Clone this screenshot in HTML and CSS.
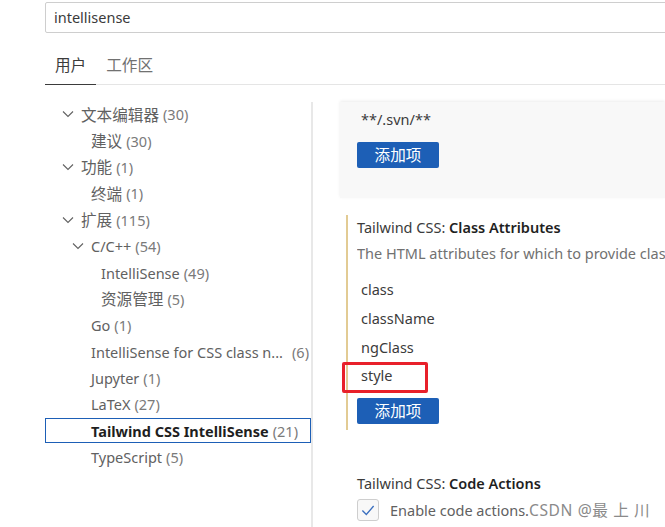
FILE: index.html
```html
<!DOCTYPE html>
<html>
<head>
<meta charset="utf-8">
<link rel="stylesheet" href="styles.css">
</head>
<body>
<div class="page">
  <div class="header">
    <div class="search">intellisense</div>
    <div class="tabs">
      <div class="tab active cjk">用户</div>
      <div class="tab cjk">工作区</div>
    </div>
  </div>
  <div class="main">
    <div class="toc">
      <div class="row l1"><svg class="chev" viewBox="0 0 12 8"><polyline points="1,1.5 6,6.5 11,1.5"/></svg><span class="lbl cjk">文本编辑器</span><span class="cnt">(30)</span></div>
      <div class="row l2"><span class="lbl cjk">建议</span><span class="cnt">(30)</span></div>
      <div class="row l1"><svg class="chev" viewBox="0 0 12 8"><polyline points="1,1.5 6,6.5 11,1.5"/></svg><span class="lbl cjk">功能</span><span class="cnt">(1)</span></div>
      <div class="row l2"><span class="lbl cjk">终端</span><span class="cnt">(1)</span></div>
      <div class="row l1"><svg class="chev" viewBox="0 0 12 8"><polyline points="1,1.5 6,6.5 11,1.5"/></svg><span class="lbl cjk">扩展</span><span class="cnt">(115)</span></div>
      <div class="row l2c"><svg class="chev" viewBox="0 0 12 8"><polyline points="1,1.5 6,6.5 11,1.5"/></svg><span class="lbl">C/C++</span><span class="cnt">(54)</span></div>
      <div class="row l3"><span class="lbl">IntelliSense</span><span class="cnt">(49)</span></div>
      <div class="row l3"><span class="lbl cjk">资源管理</span><span class="cnt">(5)</span></div>
      <div class="row l2"><span class="lbl">Go</span><span class="cnt">(1)</span></div>
      <div class="row l2"><span class="lbl">IntelliSense for CSS class n...</span><span class="cnt gap">(6)</span></div>
      <div class="row l2"><span class="lbl">Jupyter</span><span class="cnt">(1)</span></div>
      <div class="row l2"><span class="lbl">LaTeX</span><span class="cnt">(27)</span></div>
      <div class="row l2 selected"><span class="lbl strong">Tailwind CSS IntelliSense</span><span class="cnt">(21)</span></div>
      <div class="row l2"><span class="lbl">TypeScript</span><span class="cnt">(5)</span></div>
    </div>
    <div class="sep"></div>
    <div class="content">
      <div class="prev">
        <div class="prev-item">**/.svn/**</div>
        <div class="btn cjk">添加项</div>
      </div>
      <div class="setting focused">
        <div class="title"><span class="cat">Tailwind CSS: </span><span class="name">Class Attributes</span></div>
        <div class="desc">The HTML attributes for which to provide class completions, hover previews, linting etc.</div>
        <div class="list">
          <div class="item">class</div>
          <div class="item">className</div>
          <div class="item">ngClass</div>
          <div class="item marked">style<span class="redbox"></span></div>
        </div>
        <div class="btn cjk">添加项</div>
      </div>
      <div class="setting second">
        <div class="title"><span class="cat">Tailwind CSS: </span><span class="name">Code Actions</span></div>
        <div class="check-row">
          <span class="checkbox"><svg viewBox="0 0 16 16"><polyline points="3,8.5 6.5,12 13,4.5"/></svg></span>
          <span class="check-text">Enable code actions.</span><span class="wm">CSDN @最 上 川</span>
        </div>
      </div>
    </div>
  </div>
</div>
</body>
</html>
```

FILE: styles.css
```css
* { box-sizing: border-box; }
html, body { margin: 0; padding: 0; background: #fff; }
body {
  width: 665px;
  height: 527px;
  overflow: hidden;
  font-family: "Noto Sans", "Noto Sans CJK SC", sans-serif;
  font-size: 14.5px;
  color: #616161;
}
.page { width: 665px; height: 527px; overflow: hidden; }
.cjk { font-size: 15.6px; }

.header { padding-top: 2px; padding-left: 45px; }
.search {
  width: 640px;
  height: 31px;
  border: 1px solid #cecece;
  border-radius: 2px;
  padding-left: 8px;
  line-height: 29px;
  color: #3b3b3b;
}
.tabs {
  margin-top: 14px;
  display: flex;
  border-bottom: 1px solid #e5e5e5;
  height: 38px;
  width: 640px;
}
.tab {
  padding: 0 10px;
  line-height: 36px;
  color: #717171;
}
.tab.active {
  color: #3b3b3b;
  border-bottom: 1px solid #3b3b3b;
  margin-bottom: -1px;
}

.main { display: flex; height: 443px; }
.toc { width: 311px; padding-top: 16px; flex: none; }
.row {
  height: 26.4px;
  display: flex;
  align-items: center;
  white-space: nowrap;
}
.row .lbl { color: #616161; }
.row .cnt { color: #7a7a7a; margin-left: 4px; flex: none; }
.row .cnt.gap { margin-left: 9px; }
.chev {
  width: 12px; height: 8px;
  fill: none; stroke: #616161; stroke-width: 1.1;
  margin-right: 7px;
  flex: none;
}
.l1 { padding-left: 62px; }
.l2 { padding-left: 91px; }
.l2c { padding-left: 72px; }
.l3 { padding-left: 101px; }
.selected {
  margin-left: 45px;
  padding-left: 45px;
  border: 1px solid #1d5fb6;
  height: 25px;
  margin-top: 0.7px;
  margin-bottom: 0.7px;
}
.lbl.strong { color: #1f1f1f; font-weight: 700; }

.sep { width: 2px; background: #e8e8e8; margin-top: 17px; flex: none; }

.content { flex: 1; padding-left: 27px; min-width: 0; }
.prev {
  margin-top: 17px;
  background: #f8f8f8;
  height: 96px;
  padding: 4px 0 0 17px;
  box-shadow: 0 -1px 3px rgba(0,0,0,0.08);
}
.prev-item {
  line-height: 26px;
  padding-left: 4px;
  color: #3b3b3b;
}
.btn {
  margin-top: 10px;
  width: 82px;
  height: 26px;
  background: #1d5fb6;
  border-radius: 2px;
  color: #fff;
  line-height: 26px;
  text-align: center;
}

.setting { padding-left: 17px; margin-top: 20px; }
.setting.focused {
  margin-left: 6px;
  padding-left: 9px;
  border-left: 2px solid #e2cb94;
  padding-bottom: 6px;
}
.title {
  line-height: 24px;
  margin-top: -3px;
  white-space: nowrap;
}
.title .cat { color: #3b3b3b; }
.title .name { color: #1f1f1f; font-weight: 600; }
.desc {
  margin-top: 2px;
  line-height: 24px;
  color: #717171;
  white-space: nowrap;
  overflow: hidden;
}
.list { margin-top: 10px; }
.item {
  height: 28.8px;
  line-height: 28.8px;
  padding-left: 4px;
  color: #3b3b3b;
  position: relative;
}
.redbox {
  position: absolute;
  left: -15px;
  top: 1px;
  width: 86px;
  height: 31px;
  border: 3px solid #e8202a;
  border-radius: 2px;
}
.focused .btn { margin-top: 8px; }

.setting.second { margin-top: 44px; }
.check-row {
  display: flex;
  align-items: center;
  margin-top: 3px;
  white-space: nowrap;
}
.checkbox {
  width: 22px; height: 22px;
  border: 1px solid #cecece;
  border-radius: 3px;
  background: #f8f8f8;
  display: flex; align-items: center; justify-content: center;
  flex: none;
}
.checkbox svg { width: 18px; height: 18px; fill: none; stroke: #3a6fbf; stroke-width: 1.2; }
.check-text { margin-left: 11px; color: #616161; }
.wm { font-size: 15.6px; color: #8a8a8a; letter-spacing: 0.6px; }
```
